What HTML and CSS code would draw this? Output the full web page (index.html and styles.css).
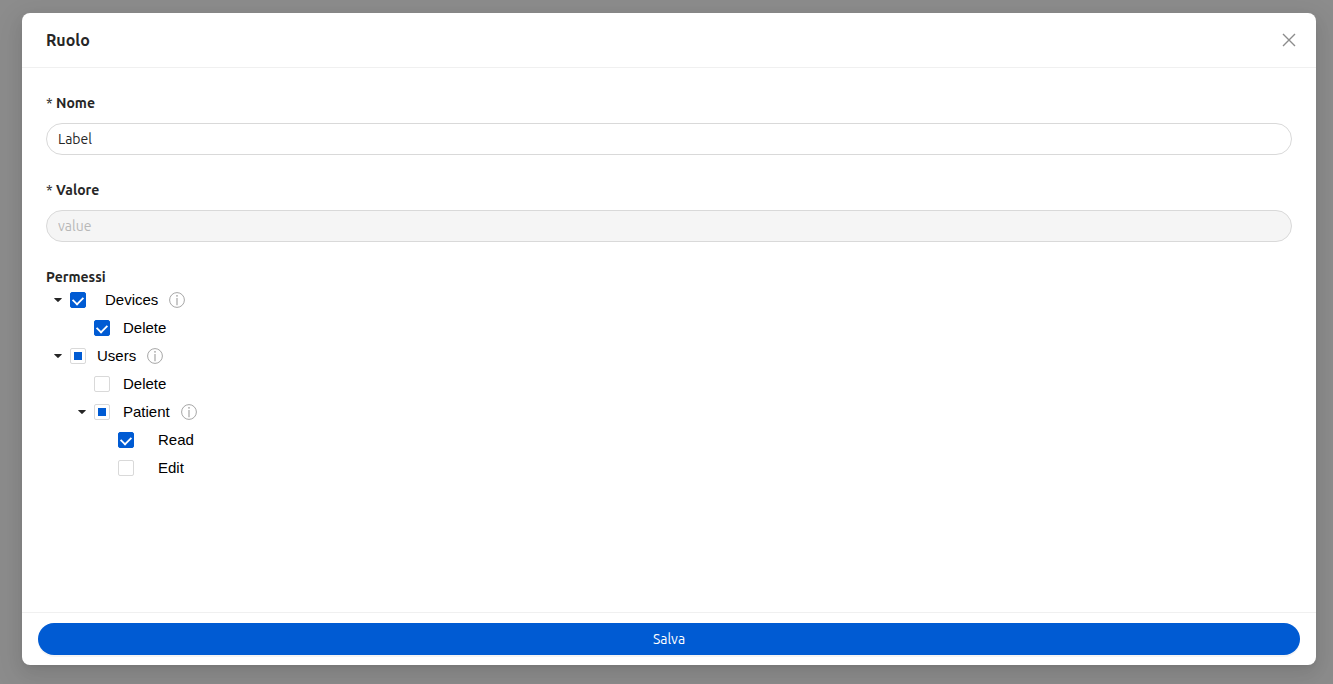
FILE: index.html
```html
<!DOCTYPE html>
<html lang="it">
<head>
    <meta charset="UTF-8">
    <meta name="viewport" content="width=device-width, initial-scale=1.0">
    <title>Ruolo</title>
    <link rel="stylesheet" href="styles.css">
</head>
<body>
<svg class="sprite" aria-hidden="true">
    <symbol id="icon-caret" viewBox="0 0 10 10">
        <path d="M1.7 3.1h6.6c.4 0 .6.4.3.7L5.4 6.8a.6.6 0 0 1-.8 0L1.4 3.8c-.3-.3-.1-.7.3-.7z" fill="currentColor"/>
    </symbol>
    <symbol id="icon-info" viewBox="0 0 16 16">
        <circle cx="8" cy="8" r="7.4" fill="none" stroke="currentColor"/>
        <path d="M8 6v7.2" fill="none" stroke="currentColor" stroke-width="1.2"/>
        <circle cx="8" cy="3.8" r=".9" fill="currentColor"/>
    </symbol>
</svg>

<div class="overlay">
    <form class="modal" role="dialog" aria-labelledby="modal-title">
        <header class="modal-header">
            <h1 id="modal-title">Ruolo</h1>
            <button type="button" class="close-button" aria-label="Chiudi">
                <svg width="14" height="14" viewBox="0 0 14 14"><path d="M1 1l12 12M13 1L1 13" fill="none" stroke="currentColor" stroke-width="1.4"/></svg>
            </button>
        </header>

        <section class="modal-body">
            <div class="field">
                <label for="nome"><span class="required">*</span> Nome</label>
                <input type="text" id="nome" value="Label">
            </div>
            <div class="field">
                <label for="valore"><span class="required">*</span> Valore</label>
                <input type="text" id="valore" value="value" disabled>
            </div>

            <h2 id="permessi">Permessi</h2>
            <ul class="tree" aria-labelledby="permessi">
                <li>
                    <div class="tree-row">
                        <button type="button" class="switcher" aria-label="Devices"><svg><use href="#icon-caret"/></svg></button>
                        <input type="checkbox" id="devices" checked>
                        <label for="devices" class="label-wide">Devices</label>
                        <svg class="info"><use href="#icon-info"/></svg>
                    </div>
                    <ul>
                        <li class="tree-row leaf">
                            <input type="checkbox" id="devices-delete" checked>
                            <label for="devices-delete">Delete</label>
                        </li>
                    </ul>
                </li>
                <li>
                    <div class="tree-row">
                        <button type="button" class="switcher" aria-label="Users"><svg><use href="#icon-caret"/></svg></button>
                        <input type="checkbox" id="users" data-partial>
                        <label for="users" class="label-tight">Users</label>
                        <svg class="info"><use href="#icon-info"/></svg>
                    </div>
                    <ul>
                        <li class="tree-row leaf">
                            <input type="checkbox" id="users-delete">
                            <label for="users-delete">Delete</label>
                        </li>
                        <li>
                            <div class="tree-row">
                                <button type="button" class="switcher" aria-label="Patient"><svg><use href="#icon-caret"/></svg></button>
                                <input type="checkbox" id="patient" data-partial>
                                <label for="patient">Patient</label>
                                <svg class="info"><use href="#icon-info"/></svg>
                            </div>
                            <ul>
                                <li class="tree-row leaf">
                                    <input type="checkbox" id="patient-read" checked>
                                    <label for="patient-read" class="label-far">Read</label>
                                </li>
                                <li class="tree-row leaf">
                                    <input type="checkbox" id="patient-edit">
                                    <label for="patient-edit" class="label-far">Edit</label>
                                </li>
                            </ul>
                        </li>
                    </ul>
                </li>
            </ul>
        </section>

        <footer class="modal-footer">
            <button type="button" class="save-button">Salva</button>
        </footer>
    </form>
</div>

<script>
    document.querySelectorAll('[data-partial]').forEach(function(box) {
        box.indeterminate = true;
    });
</script>
</body>
</html>
```
FILE: styles.css
```css
* {
    box-sizing: border-box;
}

body {
    margin: 0;
    color: #262626;
    font-family: Ubuntu, "Noto Sans", sans-serif;
    font-size: 14px;
    line-height: 22px;
}

button,
input {
    margin: 0;
    font: inherit;
}

button {
    padding: 0;
    border: none;
    background: none;
    cursor: pointer;
}

.sprite {
    display: none;
}

.overlay {
    display: flex;
    min-height: 100vh;
    padding: 13px 17px 19px 22px;
    background-color: #8c8c8c;
}

.modal {
    display: flex;
    flex: 1;
    flex-direction: column;
    background-color: #fff;
    border-radius: 8px;
    box-shadow: 0 3px 6px -4px rgba(0, 0, 0, 0.12), 0 6px 16px rgba(0, 0, 0, 0.08), 0 9px 28px 8px rgba(0, 0, 0, 0.05);
}

.modal-header {
    display: flex;
    align-items: center;
    justify-content: space-between;
    padding: 16px 20px 16px 24px;
    border-bottom: 1px solid #f0f0f0;
}

h1 {
    margin: 0;
    font-size: 16px;
    font-weight: 700;
    line-height: 22px;
}

.close-button {
    display: flex;
    color: #8c8c8c;
}

.modal-body {
    flex: 1;
    padding: 24px;
}

.field {
    display: flex;
    flex-direction: column;
    gap: 9px;
    margin-bottom: 24px;
}

.field label,
h2 {
    margin: 0;
    font-size: 14px;
    font-weight: 700;
    line-height: 22px;
}

.required {
    font-weight: 400;
}

.field input {
    width: 100%;
    height: 32px;
    padding: 4px 11px;
    color: #262626;
    background-color: #fff;
    border: 1px solid #d9d9d9;
    border-radius: 16px;
}

.field input:disabled {
    color: #b8b8b8;
    background-color: #f5f5f5;
}

.tree,
.tree ul {
    margin: 0;
    padding: 0;
    list-style: none;
}

.tree ul {
    padding-left: 24px;
}

.tree-row {
    display: flex;
    align-items: center;
    height: 24px;
    margin-bottom: 4px;
    color: #000;
    font-family: "Liberation Sans", Arial, sans-serif;
    font-size: 15px;
}

.leaf {
    padding-left: 24px;
}

.switcher {
    display: flex;
    align-items: center;
    justify-content: center;
    width: 24px;
    height: 24px;
    color: #262626;
}

.switcher svg {
    width: 10px;
    height: 10px;
}

.tree input {
    display: grid;
    place-items: center;
    width: 16px;
    height: 16px;
    appearance: none;
    background-color: #fff;
    border: 1px solid #d9d9d9;
    border-radius: 2px;
}

.tree input:checked {
    background-color: #005bd3;
    border-color: #005bd3;
}

.tree input:checked::before {
    content: "";
    width: 6px;
    height: 9px;
    border: solid #fff;
    border-width: 0 2px 2px 0;
    transform: translateY(-1px) rotate(45deg) scale(0.9);
}

.tree input:indeterminate::before {
    content: "";
    width: 8px;
    height: 8px;
    background-color: #005bd3;
}

.tree label {
    margin-left: 13px;
}

.tree .label-tight {
    margin-left: 11px;
}

.tree .label-wide {
    margin-left: 19px;
}

.tree .label-far {
    margin-left: 24px;
}

.info {
    width: 16px;
    height: 16px;
    margin-left: 11px;
    color: #a6a6a6;
}

.modal-footer {
    padding: 10px 16px;
    border-top: 1px solid #f0f0f0;
}

.save-button {
    display: block;
    width: 100%;
    height: 32px;
    color: #fff;
    background-color: #005bd3;
    border-radius: 16px;
    box-shadow: 0 2px 0 rgba(0, 0, 0, 0.045);
}
```
